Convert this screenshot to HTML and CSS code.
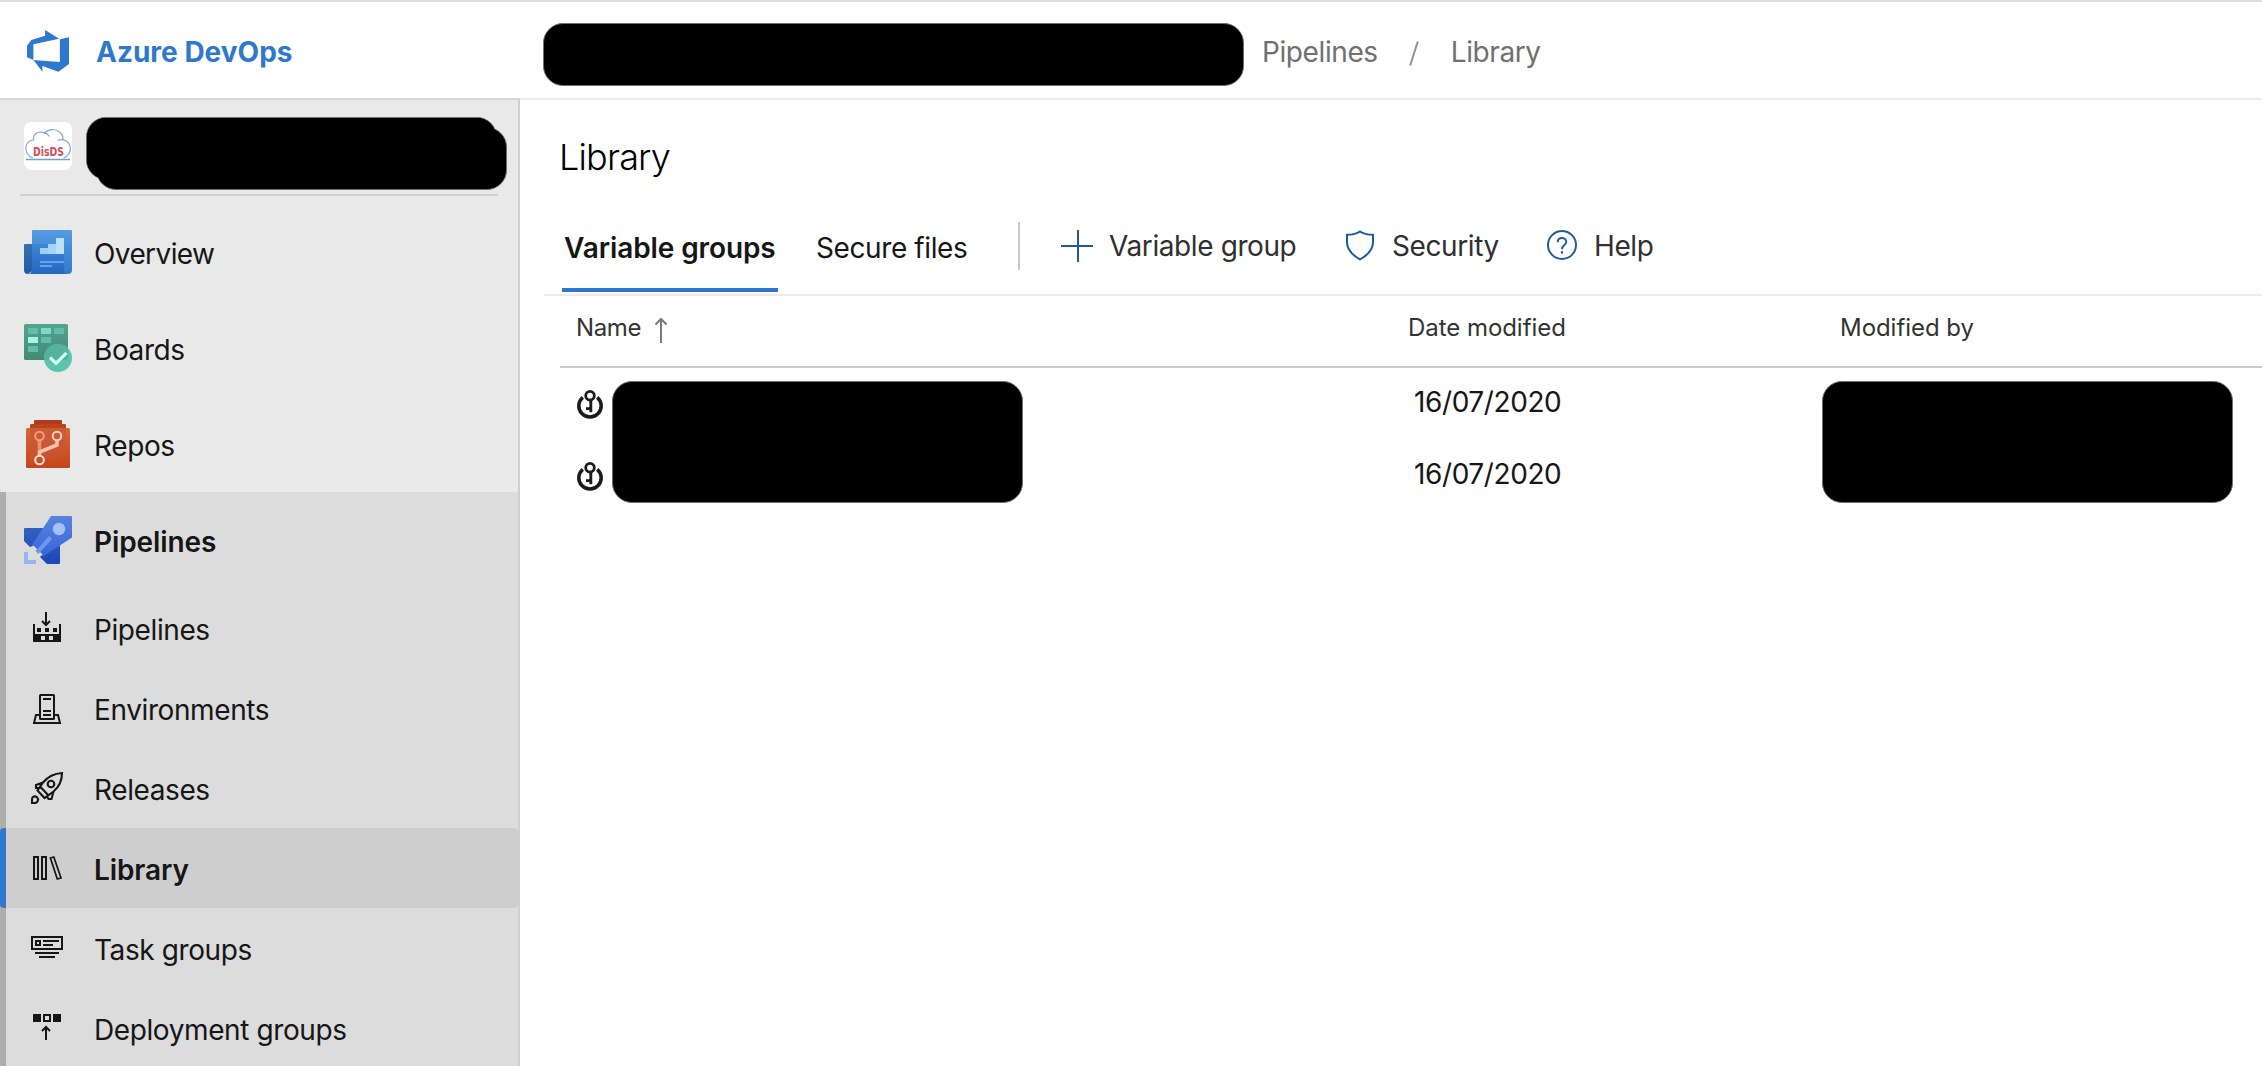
FILE: index.html
```html
<!DOCTYPE html>
<html lang="en">
<head>
<meta charset="utf-8">
<title>Library - Pipelines</title>
<link rel="stylesheet" href="styles.css">
</head>
<body>
<header class="topbar">
  <a class="brand">
    <svg class="brand-logo" width="42" height="42" viewBox="27 30 42 42" fill="#2f78d0"><path d="M27 45.7 31.3 40 45.1 35.7V30L59.2 38.7 33.4 44.3V60L27 57.3ZM59.9 39.3 69 37.3V64L58.5 71.8 42.4 66V71.8L33.4 60 59.9 62Z"/></svg>
    <span class="brand-name">Azure DevOps</span>
  </a>
  <nav class="crumbs">
    <span class="redact redact-crumb"></span>
    <span class="crumb crumb-first">Pipelines</span>
    <svg class="crumb-slash" width="12" height="28" viewBox="0 0 12 28"><path d="M9.8 1.5 2.2 25.5" stroke="#929292" stroke-width="2"/></svg>
    <span class="crumb crumb-last">Library</span>
  </nav>
</header>
<div class="body">
  <aside class="sidebar">
    <div class="project">
      <svg class="project-logo" width="48" height="48" viewBox="0 0 48 48"><rect width="48" height="48" rx="7" fill="#fff"/><path d="M9 36C3.500 34 1 29 2 24.500 3 20 6 18 9.500 18 9 12 14 9.500 18 10.200 21 10.500 23.500 12 25.500 14.500M20 11.500C24 7 31 6 35.500 10 38 12 39.500 14.500 39 18M33.500 18.500C40 16 45.500 20 46.300 25 47 30 44 34.500 39.500 36" fill="none" stroke="#7fabd9" stroke-width="1.200"/><path d="M2 37.500H46" stroke="#6f9fd0" stroke-width="1.500"/><text class="logo-text" x="9" y="34" textLength="31" lengthAdjust="spacingAndGlyphs">DisDS</text></svg>
      <span class="redact redact-proj-a"></span>
      <span class="redact redact-proj-b"></span>
    </div>
    <ul class="nav">
      <li class="hub">
        <svg class="hub-icon" width="48" height="48" viewBox="0 0 48 48"><defs><linearGradient id="o1" x2="0" y2="1"><stop stop-color="#559be0"/><stop offset="1" stop-color="#2f7ad2"/></linearGradient><linearGradient id="o2" x2="0" y2="1"><stop stop-color="#3c86d6"/><stop offset="1" stop-color="#2766bf"/></linearGradient><linearGradient id="o3" x2="0" y2="1"><stop stop-color="#3570ae"/><stop offset="1" stop-color="#215ba4"/></linearGradient></defs><path d="M1 16H10V42L4 46Q0 46 0 42V17Q0 16 1 16Z" fill="url(#o3)"/><path d="M9 2H47Q48 2 48 3V42Q48 46 44 46H4Q8 46 8 42V3Q8 2 9 2Z" fill="url(#o1)"/><path d="M8 16H40V42Q40 46 44 46H4Q8 46 8 42Z" fill="url(#o2)"/><path d="M16 20H24V26H16Z" fill="#9fcef9"/><path d="M24 16H32V26H24Z" fill="#a6d3fb"/><path d="M32 10H40V26H32Z" fill="#bfe0fd"/><path d="M16 33H40V35H16ZM16 37H28V39H16Z" fill="#5ea6e8"/></svg>
        <span class="label label-wide">Overview</span>
      </li>
      <li class="hub">
        <svg class="hub-icon" width="48" height="48" viewBox="0 0 48 48"><defs><linearGradient id="b1" x2="0" y2="1"><stop stop-color="#56a291"/><stop offset="1" stop-color="#42897a"/></linearGradient></defs><rect width="44" height="36" rx="1.500" fill="url(#b1)"/><path d="M4 4H14V10H4ZM30 4H40V10H30ZM17 13H27V19H17ZM4 22H14V28H4Z" fill="#60bda9"/><path d="M17 4H27V10H17Z" fill="#80d9c7"/><path d="M4 13H14V19H4Z" fill="#a5f5e6"/><circle cx="34" cy="34" r="14" fill="#5ac4ad"/><path d="M20.200 36A14 14 0 0 1 44 24V35L43 36Z" fill="#53b39f"/><path d="M26 33.500 32 39.300 42.500 28.800" fill="none" stroke="#d2fbf3" stroke-width="3.200"/></svg>
        <span class="label">Boards</span>
      </li>
      <li class="hub">
        <svg class="hub-icon" width="48" height="48" viewBox="0 0 48 48"><defs><linearGradient id="r1" x2="0" y2="1"><stop stop-color="#d6663b"/><stop offset="1" stop-color="#c5451d"/></linearGradient></defs><rect x="10" width="28" height="8" rx="1" fill="#b03c17"/><rect x="6" y="4" width="36" height="8" rx="1" fill="#bc441b"/><rect x="2" y="8" width="44" height="40" rx="1.500" fill="url(#r1)"/><path d="M6 8H42V30Q40 34 34 37L6 43Z" fill="#c65634" opacity=".65"/><g fill="none" stroke-width="3.600"><path d="M15.500 20V31" stroke="#e69270"/><path d="M33 20V25L15.500 32V36" stroke="#f3c2ad"/></g><g fill="none" stroke-width="2"><circle cx="15.500" cy="16" r="4.300" stroke="#ee9f7d"/><circle cx="33" cy="16" r="4.300" stroke="#f9d0be"/><circle cx="15.500" cy="40" r="4.300" stroke="#fbe1d6"/></g></svg>
        <span class="label">Repos</span>
      </li>
    </ul>
    <ul class="nav nav-open">
      <li class="hub">
        <svg class="hub-icon" width="48" height="48" viewBox="0 0 48 48"><defs><linearGradient id="p1" x2="0" y2="1"><stop stop-color="#5684e2"/><stop offset="1" stop-color="#3965d6"/></linearGradient><linearGradient id="p2" x2="0" y2="1"><stop stop-color="#355fbe"/><stop offset="1" stop-color="#1b48b8"/></linearGradient></defs><path d="M1 12H24L36 28V47Q36 48 35 48H23L16 41 22 30 12 29 6 31 0 25V13Q0 12 1 12Z" fill="url(#p2)"/><path d="M27 0H47Q48 0 48 1V21.500L19 40.500 15 38 10 33 8 29Z" fill="url(#p1)"/><path d="M7.500 31.500 9.500 29.500 18.500 38.500 16.500 40.500 13.500 37.500 12 39 9 36 10.500 34.500Z" fill="#dcdcdc"/><path d="M25 20 28 23 14.500 38 11.500 35Z" fill="#6c96ef"/><circle cx="35" cy="13" r="6.200" fill="#a6bff3"/><path d="M0 36H4V44H12V48H0Z" fill="#98b4f0"/></svg>
        <span class="label strong">Pipelines</span>
      </li>
      <li class="item">
        <svg class="item-icon" width="32" height="32" viewBox="0 0 32 32"><path fill="#161616" fill-rule="evenodd" d="M2 12H4V22H28V12H30V30H2ZM10 24H14V28H10ZM18 24H22V28H18Z"/><path fill="#161616" d="M6 16H10V20H6ZM14 16H18V20H14ZM22 16H26V20H22Z"/><path d="M15 0V13M11 9 15 13 19 9" fill="none" stroke="#161616" stroke-width="2"/></svg>
        <span class="label">Pipelines</span>
      </li>
      <li class="item">
        <svg class="item-icon" width="32" height="32" viewBox="0 0 32 32" fill="none" stroke="#161616" stroke-width="2"><rect x="9" y="3" width="14" height="24" rx=".6"/><path d="M12 7H20M12 19H20M12 23H20M9 23H5L3 31H29L27 23H23"/></svg>
        <span class="label">Environments</span>
      </li>
      <li class="item">
        <svg class="item-icon" width="32" height="32" viewBox="0 0 32 32" fill="none" stroke="#161616" stroke-width="2.100"><path d="M31 1C31 8 28.500 14.500 22.500 19.500L13.500 26 6.500 18.500 12 10.500C17 4.500 23 1.500 31 1ZM12 10.500 5 13V16L8.500 15.800M22.500 19.500 20.500 27H17.500L16 24.500M9.500 15 17.500 23.500M1 31V27C1.200 24.500 4 23.600 6 25.200 8 27.200 6.800 30.500 4.500 31Z"/><circle cx="20" cy="12" r="3.300"/></svg>
        <span class="label">Releases</span>
      </li>
      <li class="item item-active">
        <svg class="item-icon" width="32" height="32" viewBox="0 0 32 32" fill="none" stroke="#161616" stroke-width="2"><path d="M3 5H7V27H3ZM11 5H15V27H11Z"/><path d="M19.400 6 22.800 5 30 26 26.300 27Z" stroke-width="1.700"/></svg>
        <span class="label strong">Library</span>
      </li>
      <li class="item">
        <svg class="item-icon" width="32" height="32" viewBox="0 0 32 32" fill="none" stroke="#161616" stroke-width="2"><path d="M1 5H31V17H1ZM5 9H9V13H5ZM12 9H28M12 13H22M4 21H28M8 25H24"/></svg>
        <span class="label">Task groups</span>
      </li>
      <li class="item">
        <svg class="item-icon" width="32" height="32" viewBox="0 0 32 32" fill="none" stroke="#161616" stroke-width="2"><path d="M2 2H10V10H2ZM22 2H30V10H22Z" fill="#161616" stroke="none"/><path d="M13 3H19V9H13ZM15 28V15M11 19 15 15 19 19"/></svg>
        <span class="label">Deployment groups</span>
      </li>
    </ul>
  </aside>
  <main class="main">
    <h1 class="title">Library</h1>
    <div class="toolbar">
      <span class="tab tab-active">Variable groups</span>
      <span class="tab tab-second">Secure files</span>
      <span class="divider"></span>
      <span class="command cmd-add"><svg width="32" height="32" viewBox="0 0 32 32"><path d="M17 0V32M0 16H32" stroke="#1e5c9f" stroke-width="2"/></svg><span>Variable group</span></span>
      <span class="command cmd-security"><svg width="28" height="32" viewBox="0 0 28 32"><path d="M14 1.500C17 3.700 22 4.800 27 4.800V12C27 20 21 25.500 14 29.500 7 25.500 1 20 1 12V4.800C6 4.800 11 3.700 14 1.500Z" fill="none" stroke="#1e5c9f" stroke-width="2"/></svg><span>Security</span></span>
      <span class="command cmd-help"><svg width="32" height="32" viewBox="0 0 32 32" fill="none" stroke="#1e5c9f"><circle cx="16" cy="15" r="14" stroke-width="2"/><path d="M11.800 12.200C11.800 6.600 20.300 6.800 20.300 11.800 20.300 15 16 15.200 16 19.300" stroke-width="1.900"/><path d="M16 21.200V23.600" stroke-width="2.200"/></svg><span>Help</span></span>
    </div>
    <div class="table">
      <div class="thead">
        <span class="c-name"><span class="h-name">Name</span><svg class="sort" width="14" height="26" viewBox="0 0 14 26" fill="none" stroke="#7a7a7a" stroke-width="2"><path d="M7 26V2M1.500 7.500 7 2 12.500 7.500"/></svg></span>
        <span class="c-date">Date modified</span>
        <span class="c-by">Modified by</span>
      </div>
      <div class="trow">
        <span class="c-name"><svg width="26" height="28" viewBox="0 0 26 28" fill="none" stroke="#1b1b1b"><path d="M5.800 7.300A11.200 11.200 0 1 0 20.200 7.300" stroke-width="3.500"/><circle cx="13" cy="5.700" r="4.300" stroke-width="2.800"/><path d="M13.800 10V22.200" stroke-width="2.900"/><path d="M9 18.600H13" stroke-width="2.800"/></svg></span>
        <span class="c-date">16/07/2020</span>
      </div>
      <div class="trow">
        <span class="c-name"><svg width="26" height="28" viewBox="0 0 26 28" fill="none" stroke="#1b1b1b"><path d="M5.800 7.300A11.200 11.200 0 1 0 20.200 7.300" stroke-width="3.500"/><circle cx="13" cy="5.700" r="4.300" stroke-width="2.800"/><path d="M13.800 10V22.200" stroke-width="2.900"/><path d="M9 18.600H13" stroke-width="2.800"/></svg></span>
        <span class="c-date">16/07/2020</span>
      </div>
      <span class="redact redact-names"></span>
      <span class="redact redact-people"></span>
    </div>
  </main>
</div>
</body>
</html>
```
FILE: styles.css
```css
* { box-sizing: border-box; }

body {
  margin: 0;
  height: 1066px;
  overflow: hidden;
  display: flex;
  flex-direction: column;
  background: #fff;
  color: #161616;
  font: 28px/40px Inter, "Liberation Sans", sans-serif;
  letter-spacing: -0.4px;
  white-space: nowrap;
}

svg { display: block; flex: none; overflow: visible; }

.redact {
  display: block;
  background: #000;
  border: 1px solid #6f6f6f;
  border-radius: 20px;
}

.topbar {
  display: flex;
  flex: none;
  height: 100px;
  border-top: 2px solid #dcdce2;
  border-bottom: 2px solid #eaeaea;
}

.brand {
  display: flex;
  width: 543px;
  padding: 28px 0 0 27px;
}

.brand-name {
  margin: 2px 0 0 27px;
  font-weight: 700;
  letter-spacing: 0;
  color: #2f78d0;
}

.crumbs {
  display: flex;
  align-items: flex-start;
  padding-top: 21px;
  color: #707070;
}

.redact-crumb { width: 701px; height: 63px; }
.crumb { margin-top: 9px; }
.crumb-first { margin-left: 18px; }
.crumb-slash { margin: 17px 0 0 30px; }
.crumb-last { margin-left: 31px; }

.body { display: flex; flex: 1; min-height: 0; }

.sidebar {
  position: relative;
  width: 520px;
  flex: none;
  margin-top: -2px;
  overflow: hidden;
  background: #e9e9e9;
  border-top: 2px solid #d6d6d6;
  border-right: 2px solid #cfcfcf;
}

.project {
  position: relative;
  height: 96px;
  margin: 0 20px;
  padding: 22px 4px 0;
  border-bottom: 2px solid #d0d0d0;
}

.redact-proj-a, .redact-proj-b {
  position: absolute;
  width: 411px;
  height: 63px;
}
.redact-proj-a { left: 66px; top: 17px; }
.redact-proj-b { left: 76px; top: 27px; }

/* covers the lower block's outline where the two overlap */
.redact-proj-a::after {
  content: "";
  position: absolute;
  z-index: 1;
  inset: 0;
  border-radius: 19px;
  background: #000;
}

.logo-text {
  font: bold 13px "DejaVu Sans", sans-serif;
  letter-spacing: 0;
  fill: #d94a5c;
}

.nav { list-style: none; margin: 0; padding: 8px 0 0; }

.nav-open {
  padding: 0;
  background: linear-gradient(90deg, #adadad 6px, #dcdcdc 6px);
}

.hub, .item { display: flex; align-items: center; }
.hub { height: 96px; padding-left: 24px; }
.item { height: 80px; padding-left: 31px; }
.hub .label { margin: 4px 0 0 22px; }
.item .label { margin: 4px 0 0 31px; }
.label.label-wide { letter-spacing: -0.6px; }
.label.strong { font-weight: 600; letter-spacing: -0.1px; }

.item-active {
  border-radius: 4px;
  background: linear-gradient(90deg, #2f78d0 6px, #cecece 6px);
}

.main { flex: 1; min-width: 0; padding-left: 24px; }

.title {
  margin: 0;
  padding: 33px 0 1px 15px;
  font-size: 36px;
  line-height: 48px;
  font-weight: 300;
  letter-spacing: -0.8px;
  color: #000;
}

.toolbar {
  display: flex;
  height: 114px;
  padding-left: 18px;
  border-bottom: 2px solid #eaeaea;
}

.tab { height: 110px; padding: 46px 0 0 2px; }
.tab-active {
  width: 216px;
  border-bottom: 4px solid #2f78d0;
  font-weight: 600;
  letter-spacing: -0.1px;
}
.tab-second { width: 240px; padding-left: 38px; }

.divider { width: 2px; height: 48px; margin-top: 40px; background: #c8c8c8; }

.command { display: flex; height: 40px; margin-top: 44px; color: #303030; }
.command svg { margin-top: 4px; }
.cmd-add { width: 285px; padding-left: 41px; gap: 16px; }
.cmd-security { width: 241px; padding-left: 41px; gap: 18px; }
.cmd-help { gap: 16px; }

.table { position: relative; margin-left: 16px; }

.thead, .trow {
  display: grid;
  grid-template-columns: 848px 432px 1fr;
}

.thead {
  height: 72px;
  padding-top: 12px;
  border-bottom: 2px solid #c8c8c8;
  font-size: 24px;
  letter-spacing: -0.05px;
  color: #333;
}

.trow { height: 72px; padding-top: 14px; }
.c-name { display: flex; padding-left: 17px; }
.h-name { margin-left: -1px; letter-spacing: -0.4px; }
.trow svg { margin-top: 8px; }
.sort { margin: 9px 0 0 13px; }
.trow .c-date { padding-left: 6px; }

.redact-names, .redact-people {
  position: absolute;
  top: 85px;
  width: 411px;
  height: 122px;
}
.redact-names { left: 52px; }
.redact-people { left: 1262px; }
```
